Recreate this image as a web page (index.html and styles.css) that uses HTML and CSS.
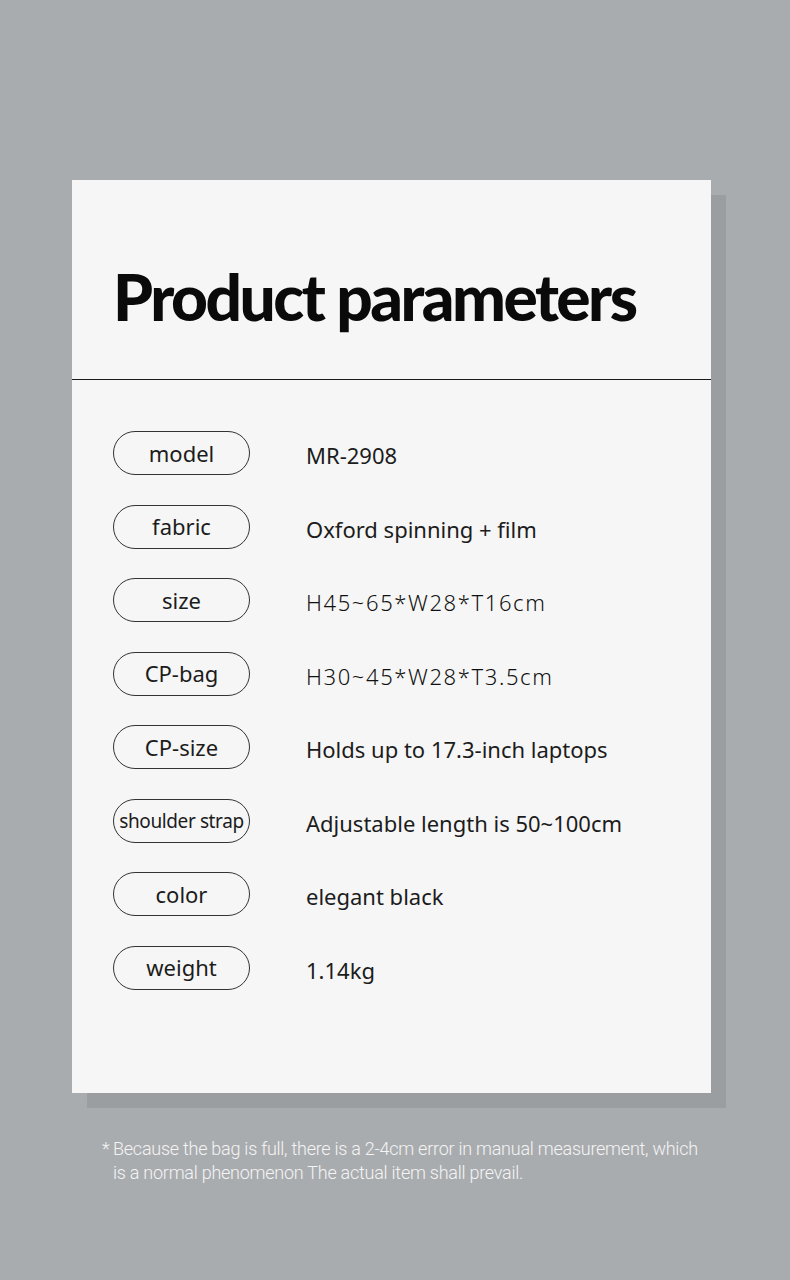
FILE: index.html
```html
<!DOCTYPE html>
<html lang="en">
<head>
<meta charset="utf-8">
<title>Product parameters</title>
<link rel="stylesheet" href="styles.css">
</head>
<body>
<main class="page">
  <section class="card">
    <header class="card-head">
      <h1 class="title">Product parameters</h1>
    </header>
    <div class="params">
      <div class="row"><span class="pill">model</span><span class="val">MR-2908</span></div>
      <div class="row"><span class="pill">fabric</span><span class="val">Oxford spinning + film</span></div>
      <div class="row"><span class="pill">size</span><span class="val val-wide">H45~65*W28*T16cm</span></div>
      <div class="row"><span class="pill">CP-bag</span><span class="val val-wide">H30~45*W28*T3.5cm</span></div>
      <div class="row"><span class="pill">CP-size</span><span class="val">Holds up to 17.3-inch laptops</span></div>
      <div class="row"><span class="pill pill-small">shoulder strap</span><span class="val">Adjustable length is 50~100cm</span></div>
      <div class="row"><span class="pill">color</span><span class="val">elegant black</span></div>
      <div class="row"><span class="pill">weight</span><span class="val">1.14kg</span></div>
    </div>
  </section>
  <p class="note"><span class="star">*</span><span>Because the bag is full, there is a 2-4cm error in manual measurement, which is a normal phenomenon The actual item shall prevail.</span></p>
</main>
</body>
</html>
```

FILE: styles.css
```css
html, body {
  margin: 0;
  padding: 0;
}
body {
  background: #a9acaf;
  width: 790px;
  height: 1280px;
  overflow: hidden;
  font-family: "Noto Sans", "Open Sans", sans-serif;
}
.page {
  padding-top: 180px;
  padding-left: 72px;
}
.card {
  width: 639px;
  height: 913px;
  background: #f6f6f6;
  box-shadow: 15px 15px 0 #9b9ea1;
  box-sizing: border-box;
}
.card-head {
  height: 200px;
  border-bottom: 1px solid #1a1a1a;
  box-sizing: border-box;
  padding-left: 41px;
  padding-top: 85px;
}
.title {
  margin: 0;
  font-family: "Lato", sans-serif;
  font-weight: 900;
  font-size: 64px;
  line-height: 64px;
  letter-spacing: -2.5px;
  color: #0a0a0a;
}
.params {
  padding: 51px 0 0 41px;
  display: flex;
  flex-direction: column;
  gap: 29.5px;
}
.row {
  display: flex;
  align-items: center;
  gap: 56px;
  height: 44px;
}
.pill {
  width: 137px;
  height: 44px;
  box-sizing: border-box;
  border: 1px solid #333;
  border-radius: 22px;
  display: flex;
  align-items: center;
  justify-content: center;
  font-size: 22px;
  color: #1c1c1c;
  padding-bottom: 1px;
}
.pill-small {
  font-size: 19px;
  letter-spacing: -0.4px;
  white-space: nowrap;
  padding-bottom: 0;
}
.val {
  font-size: 22px;
  color: #1c1c1c;
  padding-top: 4px;
}
.val-wide {
  letter-spacing: 1.6px;
  font-weight: 300;
  color: #111;
}
.note {
  margin: 44px 0 0 30px;
  width: 604px;
  display: flex;
  font-family: "Roboto", sans-serif;
  font-weight: 300;
  font-size: 18px;
  line-height: 24px;
  letter-spacing: -0.25px;
  color: #f4f4f4;
}
.star {
  width: 11px;
  flex: none;
}
```
